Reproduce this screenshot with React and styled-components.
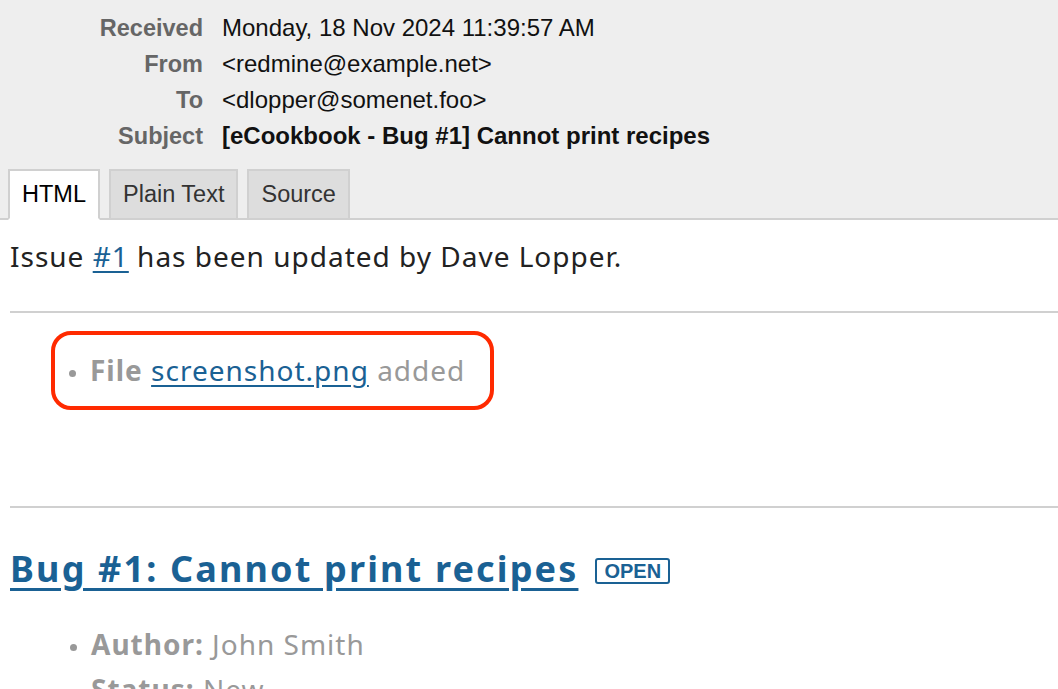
import React from 'react';
import styled, { createGlobalStyle } from 'styled-components';

const GlobalStyle = createGlobalStyle`
  html, body {
    margin: 0;
    padding: 0;
    background: #fff;
    overflow: hidden;
  }
`;

const LINK = '#1a6194';

const Page = styled.div`
  width: 1058px;
  height: 689px;
  overflow: hidden;
  font-family: "Liberation Sans", Arial, sans-serif;
`;

const Header = styled.div`
  background: #eeeeee;
  padding-top: 10px;
  border-bottom: 2px solid #d0d0d0;
  display: flex;
  flex-direction: column;
`;

const Fields = styled.div`
  display: grid;
  grid-template-columns: 203px auto;
  column-gap: 19px;
  grid-auto-rows: 36px;
  align-items: center;
`;

const Label = styled.div`
  text-align: right;
  font-size: 23.5px;
  font-weight: bold;
  color: #666;
`;

const Value = styled.div`
  color: #111;
  font-size: 24px;
  font-weight: ${p => (p.$strong ? 'bold' : 'normal')};
  white-space: nowrap;
`;

const Tabs = styled.div`
  display: flex;
  gap: 9px;
  padding-left: 8px;
  margin-top: 15px;
  margin-bottom: -2px;
`;

const Tab = styled.div`
  height: 47px;
  padding: 0 12px;
  display: flex;
  align-items: center;
  font-size: 23.5px;
  color: ${p => (p.$active ? '#000' : '#333')};
  background: ${p => (p.$active ? '#fff' : '#dddddd')};
  border: 2px solid #d0d0d0;
  border-bottom: ${p => (p.$active ? '2px solid #fff' : '2px solid #d0d0d0')};
`;

const Body = styled.div`
  padding-left: 10px;
  font-family: "Noto Sans", "Open Sans", sans-serif;
  color: #222;
  letter-spacing: 1px;
`;

const Intro = styled.p`
  margin: 0;
  padding-top: 18px;
  font-size: 28px;
  line-height: 36px;
`;

const Link = styled.a`
  color: ${LINK};
  text-decoration: underline;
  text-underline-offset: 4px;
`;

const Rule = styled.hr`
  border: none;
  border-top: 2px solid #d0d0d0;
  margin: ${p => p.$mt || 0}px 0 0 0;
`;

const Highlight = styled.div`
  display: inline-block;
  margin: 18px 0 0 41px;
  padding: 15px 25px 16px 0;
  border: 4px solid #ff2a00;
  border-radius: 20px;
`;

const List = styled.ul`
  margin: ${p => p.$mt || 0}px 0 0 0;
  padding-left: ${p => p.$indent || 80}px;
  color: #999;
  font-size: 28px;
  line-height: ${p => p.$lh || 45}px;
  li::marker {
    font-size: 20px;
  }
`;

const Bold = styled.b`
  font-weight: bold;
`;

const Heading = styled.h1`
  margin: 39px 0 0 0;
  font-size: 36px;
  line-height: 44px;
  letter-spacing: 2.15px;
  display: flex;
  align-items: center;
  gap: 17px;
  a {
    text-underline-offset: 6px;
  }
`;

const Badge = styled.span`
  border: 2px solid ${LINK};
  border-radius: 3px;
  color: ${LINK};
  font-family: "Liberation Sans", Arial, sans-serif;
  font-size: 20px;
  font-weight: bold;
  letter-spacing: 0;
  line-height: 22px;
  padding: 0 7px;
  margin-top: 4px;
`;

export default function App() {
  return (
    <Page>
      <GlobalStyle />
      <Header>
        <Fields>
          <Label>Received</Label>
          <Value>Monday, 18 Nov 2024 11:39:57 AM</Value>
          <Label>From</Label>
          <Value>&lt;redmine@example.net&gt;</Value>
          <Label>To</Label>
          <Value>&lt;dlopper@somenet.foo&gt;</Value>
          <Label>Subject</Label>
          <Value $strong>[eCookbook - Bug #1] Cannot print recipes</Value>
        </Fields>
        <Tabs>
          <Tab $active>HTML</Tab>
          <Tab>Plain Text</Tab>
          <Tab>Source</Tab>
        </Tabs>
      </Header>
      <Body>
        <Intro>
          Issue <Link href="#">#1</Link> has been updated by Dave Lopper.
        </Intro>
        <Rule $mt={37} />
        <Highlight>
          <List $indent={35} $lh={40}>
            <li>
              <Bold>File</Bold> <Link href="#">screenshot.png</Link> added
            </li>
          </List>
        </Highlight>
        <Rule $mt={96} />
        <Heading>
          <Link href="#">Bug #1: Cannot print recipes</Link>
          <Badge>OPEN</Badge>
        </Heading>
        <List $indent={81} $mt={31}>
          <li>
            <Bold>Author:</Bold> John Smith
          </li>
          <li>
            <Bold>Status:</Bold> New
          </li>
        </List>
      </Body>
    </Page>
  );
}
